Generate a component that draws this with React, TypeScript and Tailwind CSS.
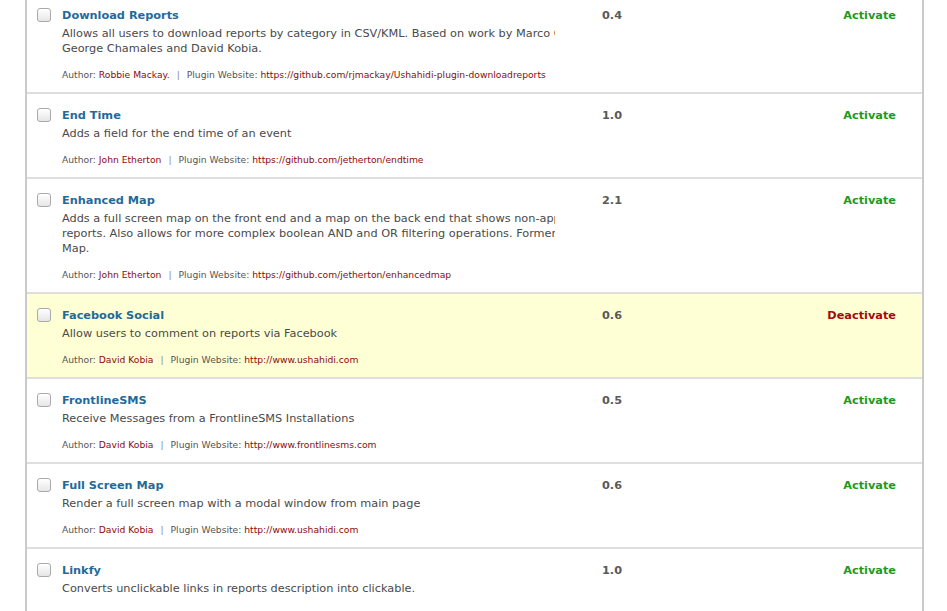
import React from 'react';

interface Plugin {
  name: string;
  lines: string[];
  author: string;
  url: string;
  version: string;
  active?: boolean;
}

const plugins: Plugin[] = [
  {
    name: 'Download Reports',
    lines: [
      'Allows all users to download reports by category in CSV/KML. Based on work by Marco Gregorio,',
      'George Chamales and David Kobia.',
    ],
    author: 'Robbie Mackay.',
    url: 'https://github.com/rjmackay/Ushahidi-plugin-downloadreports',
    version: '0.4',
  },
  {
    name: 'End Time',
    lines: ['Adds a field for the end time of an event'],
    author: 'John Etherton',
    url: 'https://github.com/jetherton/endtime',
    version: '1.0',
  },
  {
    name: 'Enhanced Map',
    lines: [
      'Adds a full screen map on the front end and a map on the back end that shows non-approved',
      'reports. Also allows for more complex boolean AND and OR filtering operations. Formerly Big',
      'Map.',
    ],
    author: 'John Etherton',
    url: 'https://github.com/jetherton/enhancedmap',
    version: '2.1',
  },
  {
    name: 'Facebook Social',
    lines: ['Allow users to comment on reports via Facebook'],
    author: 'David Kobia',
    url: 'http://www.ushahidi.com',
    version: '0.6',
    active: true,
  },
  {
    name: 'FrontlineSMS',
    lines: ['Receive Messages from a FrontlineSMS Installations'],
    author: 'David Kobia',
    url: 'http://www.frontlinesms.com',
    version: '0.5',
  },
  {
    name: 'Full Screen Map',
    lines: ['Render a full screen map with a modal window from main page'],
    author: 'David Kobia',
    url: 'http://www.ushahidi.com',
    version: '0.6',
  },
  {
    name: 'Linkfy',
    lines: ['Converts unclickable links in reports description into clickable.'],
    author: 'Henry Addo',
    url: 'https://github.com/ushahidi/linkfy',
    version: '1.0',
  },
];

const Checkbox: React.FC = () => (
  <div className="w-[14px] h-[14px] rounded-[3px] border border-[#a9a9a9] bg-gradient-to-b from-white to-[#e6e6e6] shadow-[inset_0_1px_0_#fff]" />
);

const PluginRow: React.FC<{ plugin: Plugin }> = ({ plugin }) => (
  <div
    className={`flex border-b-2 border-[#dedede] pt-[12px] pb-[10px] ${
      plugin.active ? 'bg-[#ffffd6]' : 'bg-white'
    }`}
  >
    <div className="w-[35px] pl-[10px] pt-[2px] shrink-0">
      <Checkbox />
    </div>
    <div className="w-[493px] shrink-0 overflow-hidden">
      <div className="h-[20px] leading-[19px] text-[11.3px] font-bold text-[#1f6a9c]">{plugin.name}</div>
      <div className="text-[11.3px] leading-[15px] text-[#4a4a4a]">
        {plugin.lines.map((line, i) => (
          <div key={i} className="whitespace-nowrap">
            {line}
          </div>
        ))}
      </div>
      <div className="mt-[12px] h-[14px] leading-[14px] text-[9.2px] text-[#555] whitespace-nowrap">
        Author: <span className="text-[#8c0a0a]">{plugin.author}</span>
        <span className="text-[#888] mx-[7px]">|</span>
        Plugin Website: <span className="text-[#8c0a0a]">{plugin.url}</span>
      </div>
    </div>
    <div className="w-[80px] ml-[47px] shrink-0 h-[19px] leading-[19px] text-[11.3px] font-bold text-[#595959]">
      {plugin.version}
    </div>
    <div
      className={`flex-1 text-right pr-[26px] h-[19px] leading-[19px] text-[11.3px] font-bold ${
        plugin.active ? 'text-[#a30a0a]' : 'text-[#1d9a1d]'
      }`}
    >
      {plugin.active ? 'Deactivate' : 'Activate'}
    </div>
  </div>
);

export default function App() {
  return (
    <div
      className="w-[947px] h-[611px] overflow-hidden bg-white"
      style={{ fontFamily: '"DejaVu Sans", Verdana, sans-serif' }}
    >
      <div className="ml-[25px] w-[899px] -mt-[6px] border-l-2 border-r-2 border-[#cacaca]">
        {plugins.map((p) => (
          <PluginRow key={p.name} plugin={p} />
        ))}
      </div>
    </div>
  );
}
